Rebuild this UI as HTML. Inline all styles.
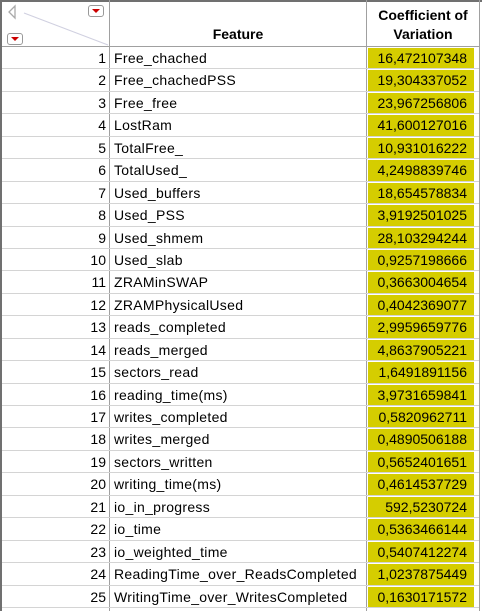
<!DOCTYPE html><html><head><style>
body{margin:0;width:482px;height:611px;background:#fff;overflow:hidden;font-family:"Liberation Sans",Arial,sans-serif;font-size:14px;color:#000;position:relative}
.top{position:absolute;left:0;top:0;width:482px;height:2px;background:#707070}
.left{position:absolute;left:0;top:0;width:2px;height:611px;background:#707070}
.v{position:absolute;top:0;width:1px;height:611px;background:#a0a0a0}
.hdr{position:absolute;top:46px;left:2px;width:478px;height:1px;background:#a0a0a0}
.rows{position:absolute;left:2px;top:47px;width:477px}
.r{height:22.44px;box-sizing:border-box;border-bottom:1px solid #d4d4d4;position:relative}
.r span{line-height:17px}
.n{position:absolute;right:373px;top:3px}
.f{position:absolute;left:112px;top:3px;letter-spacing:0.3px}
.y{position:absolute;left:366px;width:106px;top:1px;bottom:0;background:#d5cd00}
.val{position:absolute;right:7px;top:2px}
.h{position:absolute;font-weight:bold;text-align:center}
.btn{position:absolute;width:16px;height:12px;border:1px solid #999;border-radius:3px;background:#fff;box-sizing:border-box}
.btn:after{content:"";position:absolute;left:3px;top:3px;border-left:4px solid transparent;border-right:4px solid transparent;border-top:4px solid #c00}
</style></head><body>
<div class="top"></div><div class="left"></div>
<div class="v" style="left:109px"></div><div class="v" style="left:366px"></div><div class="v" style="left:479px"></div>
<div class="hdr"></div>
<svg style="position:absolute;left:0;top:0" width="110" height="47"><path d="M15 6 L9 12 L15 18 Z" fill="none" stroke="#aaa" stroke-width="1.3"/><line x1="24" y1="13" x2="108" y2="45" stroke="#d0d0e0"/></svg>
<div class="btn" style="left:88px;top:5px"></div>
<div class="btn" style="left:7px;top:33px"></div>
<div class="h" style="left:110px;width:256px;top:26px">Feature</div>
<div class="h" style="left:367px;width:112px;top:6px;line-height:19px">Coefficient of<br>Variation</div>
<div class="rows">
<div class="r"><span class="n">1</span><span class="f">Free_chached</span><div class="y"><span class="val">16,472107348</span></div></div>
<div class="r"><span class="n">2</span><span class="f">Free_chachedPSS</span><div class="y"><span class="val">19,304337052</span></div></div>
<div class="r"><span class="n">3</span><span class="f">Free_free</span><div class="y"><span class="val">23,967256806</span></div></div>
<div class="r"><span class="n">4</span><span class="f">LostRam</span><div class="y"><span class="val">41,600127016</span></div></div>
<div class="r"><span class="n">5</span><span class="f">TotalFree_</span><div class="y"><span class="val">10,931016222</span></div></div>
<div class="r"><span class="n">6</span><span class="f">TotalUsed_</span><div class="y"><span class="val">4,2498839746</span></div></div>
<div class="r"><span class="n">7</span><span class="f">Used_buffers</span><div class="y"><span class="val">18,654578834</span></div></div>
<div class="r"><span class="n">8</span><span class="f">Used_PSS</span><div class="y"><span class="val">3,9192501025</span></div></div>
<div class="r"><span class="n">9</span><span class="f">Used_shmem</span><div class="y"><span class="val">28,103294244</span></div></div>
<div class="r"><span class="n">10</span><span class="f">Used_slab</span><div class="y"><span class="val">0,9257198666</span></div></div>
<div class="r"><span class="n">11</span><span class="f">ZRAMinSWAP</span><div class="y"><span class="val">0,3663004654</span></div></div>
<div class="r"><span class="n">12</span><span class="f">ZRAMPhysicalUsed</span><div class="y"><span class="val">0,4042369077</span></div></div>
<div class="r"><span class="n">13</span><span class="f">reads_completed</span><div class="y"><span class="val">2,9959659776</span></div></div>
<div class="r"><span class="n">14</span><span class="f">reads_merged</span><div class="y"><span class="val">4,8637905221</span></div></div>
<div class="r"><span class="n">15</span><span class="f">sectors_read</span><div class="y"><span class="val">1,6491891156</span></div></div>
<div class="r"><span class="n">16</span><span class="f">reading_time(ms)</span><div class="y"><span class="val">3,9731659841</span></div></div>
<div class="r"><span class="n">17</span><span class="f">writes_completed</span><div class="y"><span class="val">0,5820962711</span></div></div>
<div class="r"><span class="n">18</span><span class="f">writes_merged</span><div class="y"><span class="val">0,4890506188</span></div></div>
<div class="r"><span class="n">19</span><span class="f">sectors_written</span><div class="y"><span class="val">0,5652401651</span></div></div>
<div class="r"><span class="n">20</span><span class="f">writing_time(ms)</span><div class="y"><span class="val">0,4614537729</span></div></div>
<div class="r"><span class="n">21</span><span class="f">io_in_progress</span><div class="y"><span class="val">592,5230724</span></div></div>
<div class="r"><span class="n">22</span><span class="f">io_time</span><div class="y"><span class="val">0,5363466144</span></div></div>
<div class="r"><span class="n">23</span><span class="f">io_weighted_time</span><div class="y"><span class="val">0,5407412274</span></div></div>
<div class="r"><span class="n">24</span><span class="f">ReadingTime_over_ReadsCompleted</span><div class="y"><span class="val">1,0237875449</span></div></div>
<div class="r"><span class="n">25</span><span class="f">WritingTime_over_WritesCompleted</span><div class="y"><span class="val">0,1630171572</span></div></div>
</div>
</body></html>
